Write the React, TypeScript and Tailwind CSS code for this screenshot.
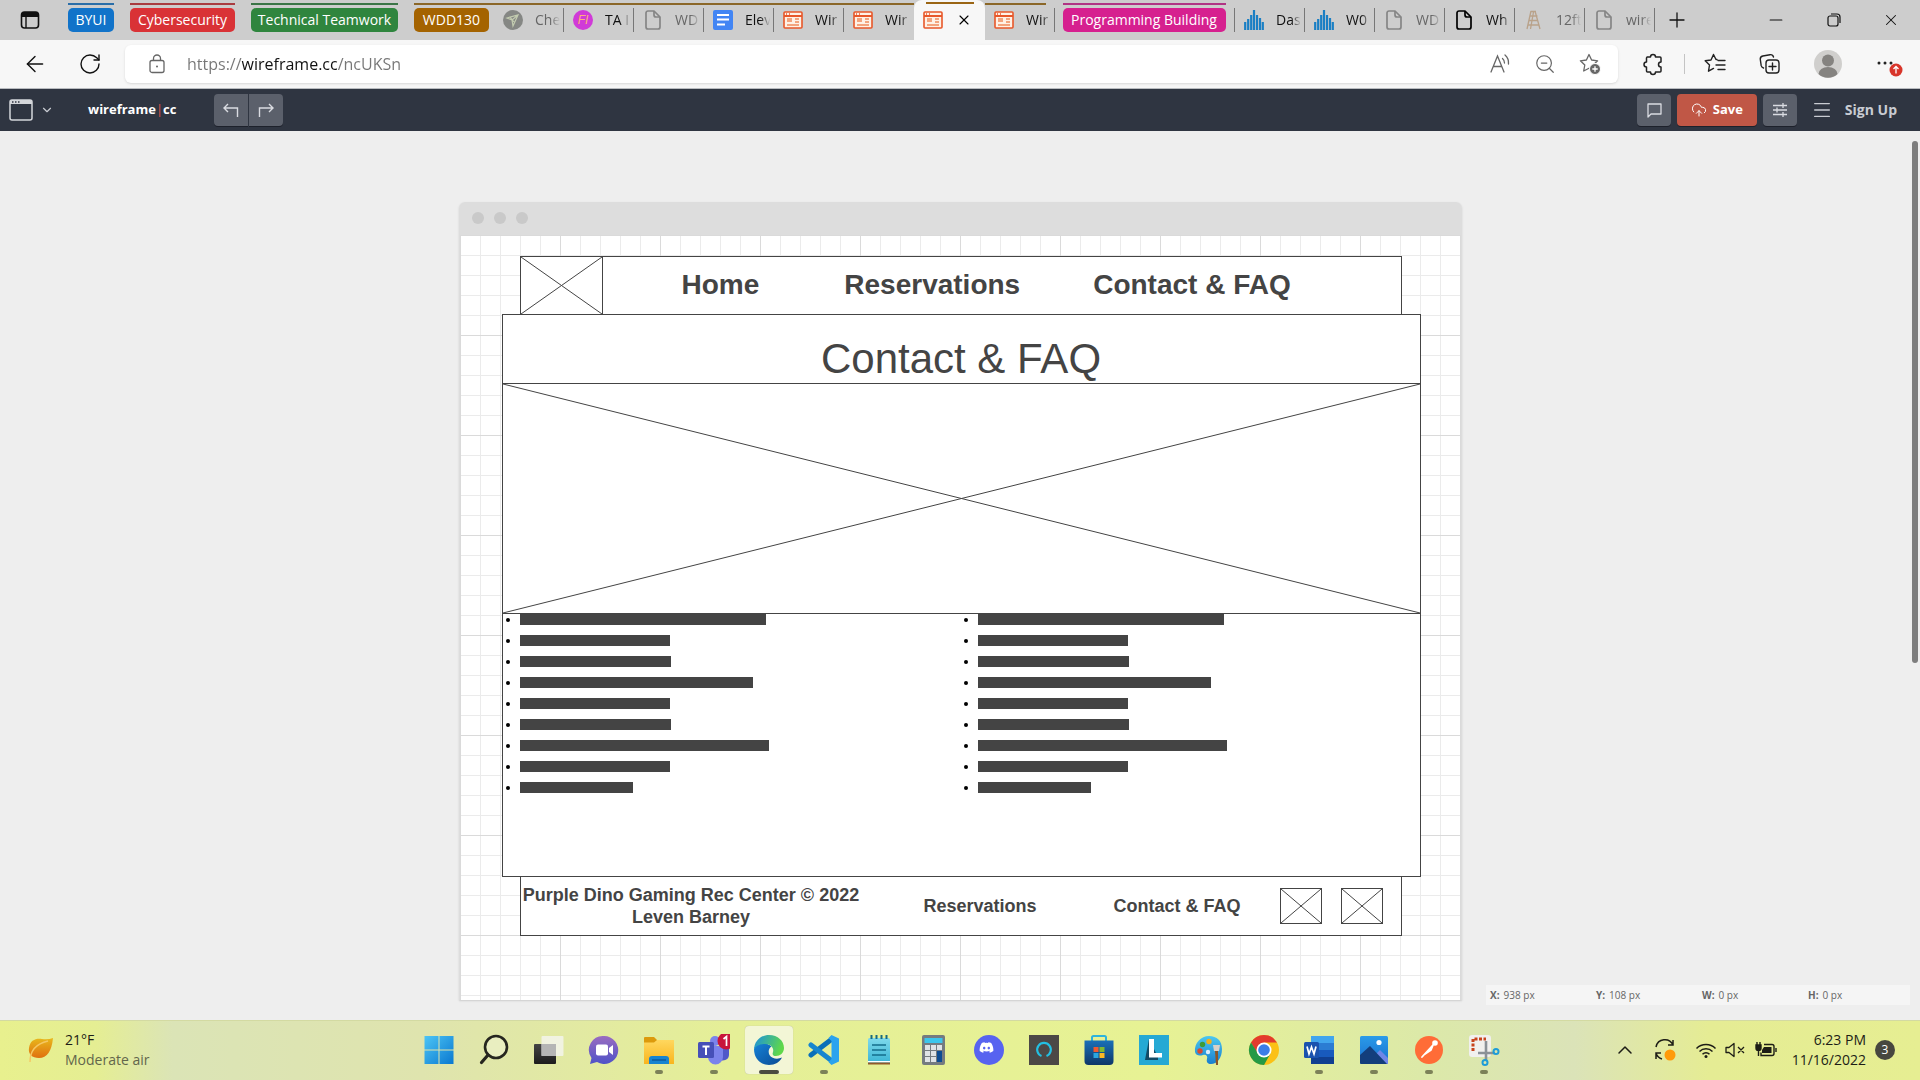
import React from "react";
import {
  ArrowLeft, ChevronDown, ChevronUp, CloudUpload, Menu, MessageSquare, Minus, Plus, RotateCw, SlidersHorizontal, X, ZoomOut,
} from "lucide-react";
import { FaDiscord } from "react-icons/fa6";

/* ---------- favicons ---------- */

function WireIcon() {
  return (
    <svg viewBox="0 0 20 18" className="h-[18px] w-5">
      <rect x="1" y="1" width="18" height="16" rx="1" fill="#fff1e6" stroke="#e8572a" strokeWidth="1.6" />
      <path d="M1 5h18" stroke="#e8572a" strokeWidth="2" />
      <path d="M3 3h1M6 3h1" stroke="#e8572a" strokeWidth="1.4" />
      <path d="M4 8h5M4 10h5M4 14h12M12 8h4M12 11h4" stroke="#f08a5c" strokeWidth="1.3" />
    </svg>
  );
}

function FileIcon({ dark }: { dark?: boolean }) {
  return (
    <svg viewBox="0 0 16 20" className={dark ? "h-5 w-4 text-black" : "h-5 w-4 text-[#858585]"} fill="none" stroke="currentColor" strokeWidth="1.7" strokeLinejoin="round">
      <path d="M3 1h6l6 6v10a2 2 0 0 1-2 2H3a2 2 0 0 1-2-2V3a2 2 0 0 1 2-2z" />
      <path d="M9 1v4a2 2 0 0 0 2 2h4" />
    </svg>
  );
}

function DocsIcon() {
  return (
    <svg viewBox="0 0 20 20" className="size-5">
      <rect width="20" height="20" rx="2" fill="#4285f4" />
      <path d="M4 5h12M4 9.500h12M4 14.500h8" stroke="#fff" strokeWidth="2" />
    </svg>
  );
}

function BarsIcon() {
  return (
    <svg viewBox="0 0 20 20" className="size-5" stroke="#1a7fc4" strokeWidth="2.200">
      <path d="M1.200 20v-8M4.200 20V9M7.200 20V5M10 20V0M13 20V5M16 20V8M18.800 20v-8" />
    </svg>
  );
}

function GreyBadgeIcon() {
  return (
    <svg viewBox="0 0 20 20" className="size-5">
      <circle cx="10" cy="10" r="10" fill="#858784" />
      <path d="M4 8l11-3-5 11-1-6zM9 10l6-5M7 7l4 5" fill="none" stroke="#c3ccb0" strokeWidth="1.200" />
    </svg>
  );
}

function FiIcon() {
  return (
    <span className="grid size-5 place-items-center rounded-full bg-[#d03ad8] font-['Liberation_Sans',sans-serif] text-xs text-[#ffb07a] italic">FI</span>
  );
}

function LadderIcon() {
  return (
    <svg viewBox="0 0 16 20" className="h-5 w-4" fill="none" stroke="#b9a28a" strokeWidth="1.300">
      <path d="M5 1L1 19M9 1l5 18M5 1.500h5M4.500 6h7M3 10.500h9M2 15h11M7.500 2l-3 17" />
    </svg>
  );
}

/* ---------- tab strip ---------- */

function Tab({ icon, title, dim, line = true }: { icon: React.ReactNode; title: string; dim?: boolean; line?: boolean }) {
  return (
    <button className="flex h-10 w-[70px] shrink-0 items-center pl-[9px] text-left">
      <span className="mr-3 flex w-5 shrink-0 justify-center">{icon}</span>
      <span className={(dim ? "text-[#666]" : "text-[#111]") + " min-w-0 flex-1 overflow-hidden whitespace-nowrap [mask-image:linear-gradient(to_right,black_55%,transparent_90%)]"}>{title}</span>
      <span className={line ? "h-6 w-px bg-[#777]" : "h-6 w-px"} />
    </button>
  );
}

function GroupLabel({ text, className, line }: { text: string; className: string; line: string }) {
  return (
    <div className="flex h-10 shrink-0 flex-col gap-[3px] pt-[3px]">
      <span className={"h-0.5 " + line} />
      <button className={"h-6 overflow-hidden rounded-[5px] text-center whitespace-nowrap text-white " + className}>{text}</button>
    </div>
  );
}

function TabStrip() {
  return (
    <header className="flex h-10 items-start overflow-hidden bg-[#cdcdcd] text-sm">
      <button aria-label="Tab actions" className="mr-7 ml-5 flex h-10 shrink-0 items-center">
        <svg viewBox="0 0 20 20" className="size-5">
          <rect x="1.500" y="2" width="17" height="16" rx="3" fill="none" stroke="#111" strokeWidth="1.600" />
          <path d="M1.500 7V5a3 3 0 0 1 3-3h11a3 3 0 0 1 3 3v2z" fill="#111" />
          <path d="M6 6v12" stroke="#111" strokeWidth="1.400" />
        </svg>
      </button>
      <div className="flex gap-4">
        <GroupLabel text="BYUI" className="w-[46px] bg-[#1173c9]" line="bg-[#2b6ea8]" />
        <GroupLabel text="Cybersecurity" className="w-[105px] bg-[#d93236]" line="bg-[#a93c40]" />
        <GroupLabel text="Technical Teamwork" className="w-[147px] bg-[#2f853e]" line="bg-[#3b7547]" />
      </div>
      <div className="ml-4 flex">
        <div className="mt-[3px] flex border-t-2 border-[#8b6728]">
          <button className="mt-[3px] mr-[5px] h-6 w-[75px] shrink-0 rounded-[5px] bg-[#a46300] text-white">WDD130</button>
          <div className="-mt-[5px] flex">
            <Tab icon={<GreyBadgeIcon />} title="Che" dim />
            <Tab icon={<FiIcon />} title="TA I" />
            <Tab icon={<FileIcon />} title="WD" dim />
            <Tab icon={<DocsIcon />} title="Elev" />
            <Tab icon={<WireIcon />} title="Wir" />
            <Tab icon={<WireIcon />} title="Wir" line={false} />
          </div>
        </div>
        <div className="flex h-10 w-[71px] shrink-0 flex-col items-center rounded-t-lg bg-[#f7f7f7] pt-0.5">
          <span className="h-0.5 w-12 bg-[#9a6514]" />
          <div className="flex h-8 w-full items-center justify-between pr-[13px] pl-[9px]">
            <WireIcon />
            <button aria-label="Close tab"><X className="size-4 text-black" strokeWidth={1.7} /></button>
          </div>
        </div>
        <div className="relative mr-2">
          <span className="absolute top-[3px] left-0 h-0.5 w-[61px] bg-[#8b6728]" />
          <Tab icon={<WireIcon />} title="Wir" />
        </div>
      </div>
      <GroupLabel text="Programming Building" className="w-[163px] bg-[#d6208f] px-2 text-left" line="bg-[#b03584]" />
      <span className="mt-2 ml-2 h-6 w-px shrink-0 bg-[#777]" />
      <Tab icon={<BarsIcon />} title="Das" />
      <Tab icon={<BarsIcon />} title="W0" />
      <Tab icon={<FileIcon />} title="WD" dim />
      <Tab icon={<FileIcon dark />} title="Wh" />
      <Tab icon={<LadderIcon />} title="12ft" dim />
      <Tab icon={<FileIcon />} title="wire" dim />
      <button aria-label="New tab" className="grid h-10 w-11 shrink-0 place-items-center"><Plus className="size-6" strokeWidth={1.3} /></button>
      <div className="ml-auto flex">
        <button aria-label="Minimize" className="grid h-10 w-[58px] place-items-center"><Minus className="size-5" strokeWidth={1.4} /></button>
        <button aria-label="Restore" className="grid h-10 w-[57px] place-items-center">
          <svg viewBox="0 0 14 14" className="size-3.5" fill="none" stroke="#111" strokeWidth="1.200">
            <rect x="1" y="3" width="10" height="10" rx="2" />
            <path d="M4 1h6a3 3 0 0 1 3 3v6" />
          </svg>
        </button>
        <button aria-label="Close window" className="grid h-10 w-[58px] place-items-center"><X className="size-[18px]" strokeWidth={1.4} /></button>
      </div>
    </header>
  );
}

/* ---------- address bar ---------- */

const star = "M10 1.500l2.600 5.500 6 .8-4.400 4.200 1.100 6L10 15.200 4.700 18l1.100-6L1.400 7.800l6-.8z";

function AddressBar() {
  return (
    <div className="flex h-[49px] items-center border-b border-[#b9bcc0] bg-[#f7f7f7]">
      <button aria-label="Back" className="grid w-[70px] shrink-0 place-items-center"><ArrowLeft className="size-[26px]" strokeWidth={1.3} /></button>
      <button aria-label="Refresh" className="mr-[15px] grid w-10 shrink-0 place-items-center"><RotateCw className="size-6" strokeWidth={1.4} /></button>
      <div className="flex h-[38px] flex-1 items-center rounded-md bg-white pr-[17px] shadow-sm">
        <svg viewBox="0 0 16 20" className="mr-[22px] ml-6 h-5 w-4" fill="none" stroke="#666" strokeWidth="1.300">
          <rect x="1" y="6.500" width="14" height="12" rx="2" />
          <path d="M4.500 6.500V4.500a3.500 3.500 0 0 1 7 0v2" />
          <circle cx="8" cy="12.500" r="1" fill="#666" stroke="none" />
        </svg>
        <input
          aria-label="Address"
          defaultValue="https://wireframe.cc/ncUKSn"
          className="min-w-0 flex-1 bg-[linear-gradient(to_right,#767676_55px,#111_55px,#111_151px,#767676_151px)] bg-clip-text text-base text-transparent outline-none"
        />
        <div className="flex gap-[23px] text-[#666]">
          <button aria-label="Read aloud">
            <svg viewBox="0 0 22 22" className="size-[22px]" fill="none" stroke="currentColor" strokeWidth="1.300" strokeLinecap="round">
              <path d="M2 19L8.500 3 15 19M4.300 13.500h8.400M13.500 5.500q2 1.800 2 4.500M16 2q4 3.500 3.500 9" />
            </svg>
          </button>
          <button aria-label="Zoom"><ZoomOut className="size-[22px]" strokeWidth={1.3} /></button>
          <button aria-label="Add favorite">
            <svg viewBox="0 0 22 22" className="size-[22px]" fill="none" stroke="currentColor" strokeWidth="1.300" strokeLinejoin="round">
              <path d={star} />
              <circle cx="16" cy="16" r="5.500" fill="#666" stroke="#fff" strokeWidth="1" />
              <path d="M16 13.300v5.400M13.300 16h5.400" stroke="#fff" />
            </svg>
          </button>
        </div>
      </div>
      <button aria-label="Extensions" className="ml-[23px]">
        <svg viewBox="0 0 24 24" className="size-6" fill="none" stroke="#222" strokeWidth="1.500" strokeLinejoin="round">
          <path d="M6 5h3.500a2.500 2.500 0 1 1 5 0H19a1 1 0 0 1 1 1v4a2.500 2.500 0 1 0 0 5v4a1 1 0 0 1-1 1h-4.500a2.500 2.500 0 0 1-5 0H6.500a1 1 0 0 1-1-1v-4a2.500 2.500 0 1 1 0-5V6z" />
        </svg>
      </button>
      <span className="mr-[19px] ml-[19px] h-5 w-px bg-[#c4c4c4]" />
      <button aria-label="Favorites">
        <svg viewBox="0 0 22 22" className="size-[22px]" fill="none" stroke="#222" strokeWidth="1.400" strokeLinejoin="round" strokeLinecap="round">
          <path d="M13 6.500h-1L9.500 1.500 7 7l-5.800.8L5.500 12l-1 6.200 5-2.800M14 7.500h7M12 12h9M14 16.500h7" />
        </svg>
      </button>
      <button aria-label="Collections" className="ml-[33px]">
        <svg viewBox="0 0 22 22" className="size-[22px]" fill="none" stroke="#222" strokeWidth="1.400" strokeLinecap="round">
          <rect x="7" y="7" width="13" height="13" rx="3" />
          <path d="M13.500 10v7M10 13.500h7M4.500 15C3 14.600 2.500 14 2.200 12.700L1.300 6.500C1 4.500 2 3.400 3.800 3L11 1.700c1.800-.3 3 .5 3.500 2.300" />
        </svg>
      </button>
      <button aria-label="Profile" className="ml-[33px]">
        <svg viewBox="0 0 28 28" className="size-7">
          <circle cx="14" cy="14" r="14" fill="#d0cfcd" />
          <circle cx="14" cy="10.500" r="6" fill="#858380" />
          <path d="M4.500 24a9.500 7 0 0 1 19 0A14 14 0 0 1 4.500 24z" fill="#858380" />
        </svg>
      </button>
      <button aria-label="Settings and more" className="mr-[17px] ml-[34px]">
        <svg viewBox="0 0 27 26" className="h-[26px] w-[27px]">
          <g fill="#222"><circle cx="3" cy="12" r="1.500" /><circle cx="9" cy="12" r="1.500" /><circle cx="15" cy="12" r="1.500" /></g>
          <circle cx="20" cy="19" r="6.500" fill="#d8352a" />
          <path d="M20 22.500v-7M17.500 18l2.500-2.500 2.500 2.500" fill="none" stroke="#fff" strokeWidth="1.300" />
        </svg>
      </button>
    </div>
  );
}

/* ---------- wireframe.cc toolbar ---------- */

const toolButton = "grid h-8 place-items-center bg-[#5b606b] text-[#dadce2] shadow-[0_1px_0_#1d212b]";

function AppBar() {
  return (
    <nav className="flex h-[42px] items-center bg-[#2f3541] font-bold text-[#c9ccd2]">
      <button aria-label="Document" className="ml-[9px] flex items-center gap-[7px]">
        <svg viewBox="0 0 24 22" className="h-[22px] w-6">
          <rect x="1" y="1" width="22" height="20" rx="2" fill="none" stroke="#d4d6da" strokeWidth="1.500" />
          <path d="M1 5V3a2 2 0 0 1 2-2h18a2 2 0 0 1 2 2v2z" fill="#d4d6da" />
          <path d="M3 3h1.500M6 3h1.500M9 3h1.500" stroke="#2f3541" strokeWidth="1.300" />
        </svg>
        <ChevronDown className="size-3.5" strokeWidth={2} />
      </button>
      <a href="#home" className="ml-[34px] w-[126px] text-[13px] text-white">wireframe<span className="font-normal text-[#e0524a]">|</span>cc</a>
      <div className="flex gap-px">
        <button aria-label="Undo" className={toolButton + " w-[34px] rounded-l"}>
          <svg viewBox="0 0 16 14" className="h-3.5 w-4" fill="none" stroke="currentColor" strokeWidth="1.400"><path d="M5 1L1 5l4 4M1 5h13.500v9" /></svg>
        </button>
        <button aria-label="Redo" className={toolButton + " w-[34px] rounded-r"}>
          <svg viewBox="0 0 16 14" className="h-3.5 w-4" fill="none" stroke="currentColor" strokeWidth="1.400"><path d="M11 1l4 4-4 4M15 5H1.500v9" /></svg>
        </button>
      </div>
      <div className="mr-[23px] ml-auto flex items-center gap-1.5">
        <button aria-label="Comments" className={toolButton + " w-[34px] rounded"}>
          <svg viewBox="0 0 16 16" className="size-4" fill="none" stroke="currentColor" strokeWidth="1.300" strokeLinejoin="round"><path d="M2 2h13v10H5l-3 3z" /></svg>
        </button>
        <button className="flex h-8 w-20 items-center justify-center gap-1.5 rounded bg-[#c05746] text-[13px] text-white shadow-[0_1px_0_#1d212b]">
          <CloudUpload className="size-4" strokeWidth={1.5} />Save
        </button>
        <button aria-label="Settings" className={toolButton + " w-[34px] rounded"}>
          <svg viewBox="0 0 16 16" className="size-4" fill="none" stroke="currentColor" strokeWidth="1.300"><path d="M1 3.500h14M1 8h14M1 12.500h14M11 1v5M5 5.500v5M11 10v5" /></svg>
        </button>
        <button aria-label="Menu" className="ml-2"><Menu className="size-[22px]" strokeWidth={1.4} /></button>
        <a href="#signup" className="ml-1.5 text-sm">Sign Up</a>
      </div>
    </nav>
  );
}

/* ---------- canvas ---------- */

function Cross({ className }: { className: string }) {
  return (
    <div className={"border-[#444] " + className}>
      <svg viewBox="0 0 100 100" preserveAspectRatio="none" className="block size-full" stroke="#444">
        <path d="M0 0L100 100M100 0L0 100" vectorEffect="non-scaling-stroke" />
      </svg>
    </div>
  );
}

const bars = ["w-[246px]", "w-[150px]", "w-[151px]", "w-[233px]", "w-[150px]", "w-[151px]", "w-[249px]", "w-[150px]", "w-[113px]"];

function BarList() {
  return (
    <ul className="flex flex-col gap-2.5 pl-[3px]">
      {bars.map((w, i) => (
        <li key={i} className="flex h-[11px] items-center gap-2.5">
          <span className="size-1 rounded-full bg-black" />
          <span className={"h-full bg-[#444] " + w} />
        </li>
      ))}
    </ul>
  );
}

function Canvas() {
  return (
    <section className="mx-auto flex w-full max-w-[1003px] flex-1 flex-col overflow-hidden rounded-t-md shadow-[0_1px_2px_#ccc]">
      <div className="flex h-[33px] shrink-0 items-center gap-2.5 bg-[#ddd] pb-0.5 pl-[13px]">
        <span className="size-3 rounded-full bg-[#c9c9c9]" />
        <span className="size-3 rounded-full bg-[#c9c9c9]" />
        <span className="size-3 rounded-full bg-[#c9c9c9]" />
      </div>
      <div className="flex-1 border-x border-[#ddd] bg-white bg-[linear-gradient(to_right,#dadada_1px,transparent_1px),linear-gradient(#dadada_1px,transparent_1px),linear-gradient(to_right,#ebebeb_1px,transparent_1px),linear-gradient(#ebebeb_1px,transparent_1px)] bg-[size:100px_100px,100px_100px,20px_20px,20px_20px] pt-[21px] pr-10 pb-16 pl-[42px] font-['Liberation_Sans',Arial,sans-serif] text-[#444]">
        <div className="mr-[19px] ml-[18px] flex h-[58px] items-center border border-b-0 border-[#444] bg-white text-[28px] leading-8 font-bold">
          <Cross className="-ml-px h-full w-[83px] border-x" />
          <span className="ml-[79px] pb-0.5">Home</span>
          <span className="ml-[85px] pb-0.5">Reservations</span>
          <span className="ml-[73px] pb-0.5">Contact &amp; FAQ</span>
        </div>
        <div className="border border-[#444] bg-white">
          <div className="flex h-[68px] items-end justify-center">
            <h1 className="text-[42px] leading-[48px]">Contact &amp; FAQ</h1>
          </div>
          <Cross className="h-[231px] border-y" />
          <div className="grid h-[262px] grid-cols-2">
            <BarList />
            <BarList />
          </div>
        </div>
        <div className="mr-[19px] ml-[18px] flex h-[59px] items-center border border-t-0 border-[#444] bg-white text-lg leading-[22px] font-bold">
          <p className="-ml-px w-[343px] text-center whitespace-nowrap">Purple Dino Gaming Rec Center © 2022<br />Leven Barney</p>
          <span className="ml-[61px]">Reservations</span>
          <span className="ml-[77px] whitespace-nowrap">Contact &amp; FAQ</span>
          <Cross className="mr-[19px] ml-auto h-9 w-[42px] border" />
          <Cross className="mr-[18px] h-9 w-[42px] border" />
        </div>
      </div>
    </section>
  );
}

const readouts = [["X:", "938 px"], ["Y:", "108 px"], ["W:", "0 px"], ["H:", "0 px"]];

function Workspace() {
  return (
    <main className="relative flex flex-1 flex-col bg-[#eee] pt-[71px] pb-5">
      <Canvas />
      <dl className="absolute right-2.5 bottom-[15px] grid h-5 w-[424px] grid-cols-4 items-center bg-[#f5f5f5] text-[10px] text-[#666]">
        {readouts.map(([k, v]) => (
          <div key={k} className="flex gap-1 pl-1"><dt className="font-bold">{k}</dt><dd>{v}</dd></div>
        ))}
      </dl>
      <span className="absolute top-2.5 right-0.5 h-[522px] w-1.5 rounded-full bg-[#7d7d7d]" />
    </main>
  );
}

/* ---------- taskbar ---------- */

const G = ({ id, a, b, x2 = "0", y2 = "1" }: { id: string; a: string; b: string; x2?: string; y2?: string }) => (
  <linearGradient id={id} x1="0" y1="0" x2={x2} y2={y2}><stop stopColor={a} /><stop offset="1" stopColor={b} /></linearGradient>
);

type TaskApp = { name: string; art: React.ReactNode; open?: boolean; active?: boolean };

const apps: TaskApp[] = [
  { name: "Start", art: <><defs><G id="st" a="#4cc5f5" b="#0a78d0" x2="1" /></defs><path d="M1.500 2H15.500V15.500H1.500zM16.500 2H30.500V15.500H16.500zM1.500 16.500H15.500V30H1.500zM16.500 16.500H30.500V30H16.500z" fill="url(#st)" /></> },
  { name: "Search", art: <><circle cx="18" cy="13" r="11" fill="#eef3d0" fillOpacity=".6" stroke="#26261f" strokeWidth="2.600" /><path d="M10 21L3.500 28.500" stroke="#26261f" strokeWidth="3.200" strokeLinecap="round" /></> },
  { name: "Task view", art: <><defs><G id="tv" a="#444" b="#1c1c1c" /></defs><rect x="1" y="10" width="22" height="20" rx="1" fill="url(#tv)" /><rect x="8.500" y="2" width="22" height="20" rx="1" fill="#f6f6f6" fillOpacity=".75" /><rect x="8.500" y="10" width="14.500" height="12" fill="#b5b5b5" /></> },
  { name: "Chat", art: <><defs><G id="ch" a="#9a6cc0" b="#4f52c8" /></defs><path d="M16 2a14 14 0 1 1-7 26L2 30l1.500-6A14 14 0 0 1 16 2z" fill="url(#ch)" /><rect x="8" y="10.500" width="12" height="11" rx="2" fill="#fff" /><path d="M21 14l4-3v10l-4-3z" fill="#fff" /></> },
  { name: "File Explorer", open: true, art: <><defs><G id="fe" a="#ffd75e" b="#f9b51d" /></defs><path d="M1 4a1 1 0 0 1 1-1h9l3 3v3H1z" fill="#dc9a0c" /><path d="M1 8.500h10l3-2.500h17v24H1z" fill="url(#fe)" /><path d="M6 30v-5a3 3 0 0 1 3-3h14a3 3 0 0 1 3 3v5z" fill="#1784d0" /><path d="M9 26h14" stroke="#0c5a9e" strokeWidth="1.500" /></> },
  { name: "Teams", open: true, art: <><circle cx="17" cy="7" r="5" fill="#7b83eb" /><circle cx="26" cy="10" r="3.500" fill="#5059c9" /><path d="M21 12h10v9a6 6 0 0 1-10 4z" fill="#5059c9" /><path d="M10 12h15v11a7.500 7.500 0 0 1-15 0z" fill="#7b83eb" /><rect x="0" y="8" width="16" height="16" rx="1.500" fill="#4650b8" /><path d="M4.500 12.500h7M8 12.500V21" stroke="#fff" strokeWidth="2" /><circle cx="28" cy="7" r="8.500" fill="#c8153a" /><path d="M25.500 5l3-2.500V12" fill="none" stroke="#fff" strokeWidth="1.700" /></> },
  { name: "Edge", open: true, active: true, art: <><defs><G id="e1" a="#1a8fe0" b="#5fd84a" x2="1" y2=".3" /><G id="e2" a="#1583d8" b="#0c4a94" x2="1" /></defs><path d="M1 15c0 10 7 16 15 16 6 0 11-3 13-7.500-4 2-10 1.500-12.500-2.500-1.500-3-1-6.500 2-8.500C13 7 3 8 1 15z" fill="url(#e2)" /><path d="M1 16C1 7 8 1 16 1c9 0 15 6 15 13 0 5-4 8-8 8-3 0-4-1.500-3-4 1-3-1-8-8-8-6 0-10 2.500-11 6z" fill="url(#e1)" /></> },
  { name: "Visual Studio Code", open: true, art: <><path d="M24 5L3 21" stroke="#0a70b8" strokeWidth="5" strokeLinecap="round" /><path d="M24 27L3 11" stroke="#1686cf" strokeWidth="5" strokeLinecap="round" /><path d="M23.500 1L31 4.500v23L23.500 31l-3-3 3-3V7l-3-3z" fill="#2aa3ee" /></> },
  { name: "Notepad", art: <><defs><G id="np" a="#7fd9ec" b="#38b3d3" /></defs><rect x="5" y="4" width="22" height="26" rx="1.500" fill="url(#np)" /><rect x="5" y="27" width="22" height="1.500" fill="#fff" /><rect x="5" y="28.500" width="22" height="2" fill="#8f5a2b" /><path d="M8.500 1v4M13.500 1v4M18.500 1v4M23.500 1v4" stroke="#176a80" strokeWidth="2" /><path d="M9 11h14M9 16h14M9 21h14" stroke="#156e8c" strokeWidth="1.700" /></> },
  { name: "Calculator", art: <><rect x="4" y="1" width="23" height="30" rx="2" fill="#747b80" /><rect x="6.500" y="4" width="18" height="5" fill="#3cc6ec" /><path d="M7 11h5v5H7zM13 11h5v5h-5zM19 11h5v5h-5zM7 17h5v5H7zM13 17h5v5h-5zM7 23h5v5H7zM13 23h5v5h-5z" fill="#dfe3e6" /><path d="M19 17h5v11h-5z" fill="#0d4c92" /></> },
  { name: "Discord", art: <><circle cx="16" cy="16" r="15" fill="#5763f0" /><FaDiscord x={6} y={6} width={20} height={20} color="#fff" /></> },
  { name: "Alexa", art: <><path d="M1 1h30v30H1z" fill="#4b4846" /><path d="M13.500 22a6.800 6.800 0 1 1 5 0" fill="none" stroke="#23bfe2" strokeWidth="2.200" /></> },
  { name: "Microsoft Store", art: <><defs><G id="ms" a="#1a70b8" b="#0e3768" /></defs><path d="M9 7V3.500A1.500 1.500 0 0 1 10.500 2h11A1.500 1.500 0 0 1 23 3.500V7" fill="none" stroke="#2cb4dc" strokeWidth="2" /><path d="M1.500 6.500h29V27a4 4 0 0 1-4 4h-21a4 4 0 0 1-4-4z" fill="url(#ms)" /><path d="M10.500 13h5v5h-5z" fill="#f05a30" /><path d="M16.500 13h5v5h-5z" fill="#80b832" /><path d="M10.500 19h5v5h-5z" fill="#2ba6e0" /><path d="M16.500 19h5v5h-5z" fill="#fcb824" /></> },
  { name: "L", art: <><path d="M1 1h30v30H1z" fill="#25a9d4" /><path d="M11 5L7 26h13v-3z" fill="#124b66" /><path d="M11 5h5v14h8v4.500H11z" fill="#fff" /></> },
  { name: "Paint", art: <><defs><G id="pt" a="#4cc8f0" b="#1a7fce" /></defs><path d="M16 2c8 0 13 5 13 13 0 9-5 15-11 15-3 0-5-2-4-5s-1-5-4-4-7 1-8-3C1 9 8 2 16 2z" fill="url(#pt)" /><circle cx="7" cy="17" r="2.700" fill="#d84a30" /><circle cx="9.500" cy="10.500" r="2.700" fill="#3f9b35" /><circle cx="16" cy="7.500" r="2.700" fill="#f2b01d" /><circle cx="15" cy="18" r="2.200" fill="#def" /><path d="M20 11h7l-1 6h-5z" fill="#d8d0c8" /><path d="M22 17h3v14h-2z" fill="#8c5526" /></> },
  { name: "Chrome", art: <><circle cx="16" cy="16" r="15" fill="#fbc116" /><path d="M3 8.500A15 15 0 0 1 29 8.500H16L9.500 20z" fill="#e33b2e" /><path d="M3 8.500A15 15 0 0 0 16 31l6.500-11.500H10z" fill="#249a45" /><circle cx="16" cy="16" r="7.500" fill="#fff" /><circle cx="16" cy="16" r="5.800" fill="#3b7de8" /></> },
  { name: "Word", open: true, art: <><rect x="8" y="2" width="23" height="7" fill="#41a5ee" /><rect x="8" y="9" width="23" height="7" fill="#2b7cd3" /><rect x="8" y="16" width="23" height="7" fill="#185abd" /><rect x="8" y="23" width="23" height="7" fill="#103f91" /><rect x="1" y="8" width="15" height="16" rx="1.500" fill="#1a52ae" /><path d="M4 12.500l2 7.500 2.500-7 2.500 7 2-7.500" fill="none" stroke="#fff" strokeWidth="1.700" /></> },
  { name: "Photos", open: true, art: <><defs><G id="ph" a="#2a9be8" b="#1a6fd0" /></defs><rect x="2" y="2" width="28" height="28" rx="1.500" fill="url(#ph)" /><path d="M16 22l6-6 8 8v6h-8z" fill="#6f86e8" /><path d="M2 21l10-9 17 18H3.500A1.500 1.500 0 0 1 2 28.500z" fill="#133e7c" /><circle cx="21" cy="8.500" r="2.600" fill="#fff" /></> },
  { name: "Postman", open: true, art: <><circle cx="16" cy="16" r="14" fill="#ff6c37" /><circle cx="22" cy="9" r="2.800" fill="#fff" /><path d="M20 11L9 23M20 11l-2 5-6 4z" stroke="#fff" strokeWidth="1.800" fill="#fff" strokeLinecap="round" strokeLinejoin="round" /></> },
  { name: "Snipping Tool", open: true, art: <><rect x="1" y="1" width="22" height="22" rx="3" fill="#f1f0ee" /><path d="M5 17V5h13" fill="none" stroke="#c8431c" strokeWidth="3" strokeDasharray="3 1.500" /><path d="M18 7v20M10 19h17" fill="none" stroke="#8b9197" strokeWidth="2.600" /><circle cx="28" cy="17.500" r="2.500" fill="none" stroke="#1e9cd8" strokeWidth="2" /><circle cx="17" cy="28.500" r="2.500" fill="none" stroke="#1e9cd8" strokeWidth="2" /></> },
];

function Taskbar() {
  return (
    <footer className="flex h-[60px] items-center border-t border-[#d3daa2] bg-[linear-gradient(to_right,#e8f08e_0%,#e5ee93_5%,#dbe4b6_9%,#dfe4ae_22%,#e5ef97_38%,#e7f294_60%,#dce9a8_74%,#dbe3b8_82%,#e5ec94_89%,#e6ee92_100%)] pb-0.5 text-[15px] leading-5 text-[#1d1d16]">
      <button className="flex flex-1 items-center gap-[11px] pl-7 text-left">
        <svg viewBox="0 0 26 26" className="size-[26px]">
          <defs><G id="leaf" a="#e8b81c" b="#e0700f" /></defs>
          <path d="M25 1q-2 20-14 20C4 21 0 17 1 11 2 3 8 1 14 2q6 1 11-1z" fill="url(#leaf)" />
          <path d="M2 25q0-17 18-21" fill="none" stroke="#f5c763" strokeWidth="1.400" />
        </svg>
        <span className="text-sm leading-5">21°F<br /><span className="text-[#62664c]">Moderate air</span></span>
      </button>
      <div className="flex gap-[7px]">
        {apps.map((a) => (
          <button key={a.name} aria-label={a.name} className={"flex size-12 flex-col items-center justify-end gap-1 rounded " + (a.active ? "bg-[#f3f6d6] shadow-[0_0_1px_#aaa]" : "")}>
            <svg viewBox="0 0 32 32" className="size-8">{a.art}</svg>
            <span className={"h-1 rounded-full " + (a.active ? "w-5 bg-[#4b4c40]" : a.open ? "w-2 bg-[#7c8158]" : "w-2")} />
          </button>
        ))}
      </div>
      <div className="flex flex-1 items-center justify-end pr-[25px]">
        <button aria-label="Hidden icons" className="mr-4"><ChevronUp className="size-6" strokeWidth={1.5} /></button>
        <svg viewBox="0 0 24 24" className="mr-[18px] size-6" fill="none" stroke="#1d1d16" strokeWidth="1.500">
          <path d="M3 9a9 9 0 0 1 17-2M20 2v5h-5M9 21a9 9 0 0 1-6-6M3 21v-6h5" />
          <circle cx="17" cy="17" r="5.500" fill="#ff9a0a" stroke="none" />
        </svg>
        <svg viewBox="0 0 22 18" className="mr-2 h-[18px] w-[22px]" fill="none" stroke="#1d1d16" strokeWidth="1.500">
          <path d="M1.500 7.500a13.500 13.500 0 0 1 19 0M4.500 10.500a9.300 9.300 0 0 1 13 0M7.500 13.300a5 5 0 0 1 7 0" />
          <circle cx="11" cy="15.500" r="1.500" fill="#1d1d16" stroke="none" />
        </svg>
        <svg viewBox="0 0 20 16" className="mr-2.5 h-4 w-5" fill="none" stroke="#1d1d16" strokeWidth="1.300" strokeLinejoin="round">
          <path d="M1 5.500h3L9 1.500v13l-5-4H1zM13 5l6 6M19 5l-6 6" />
        </svg>
        <svg viewBox="0 0 22 18" className="mr-[15px] h-[18px] w-[22px]" fill="none" stroke="#1d1d16" strokeWidth="1.400">
          <path d="M9 3.500h8a2 2 0 0 1 2 2v7a2 2 0 0 1-2 2H6v-3M21 7v4" />
          <path d="M9 6h7.500v6H7V9z" fill="#1d1d16" stroke="none" />
          <path d="M2 1v3M5 1v3M1 4h5v3a2.500 2.500 0 0 1-5 0zM3.500 9v6" fill="#1d1d16" />
        </svg>
        <span className="text-right text-sm leading-5">6:23 PM<br />11/16/2022</span>
        <span className="ml-[9px] grid size-5 place-items-center rounded-full bg-[#47473f] text-xs text-white">3</span>
      </div>
    </footer>
  );
}

export default function App() {
  return (
    <div className="flex min-h-screen flex-col font-['Open_Sans','Noto_Sans',sans-serif] text-[#111]">
      <TabStrip />
      <AddressBar />
      <AppBar />
      <Workspace />
      <Taskbar />
    </div>
  );
}
